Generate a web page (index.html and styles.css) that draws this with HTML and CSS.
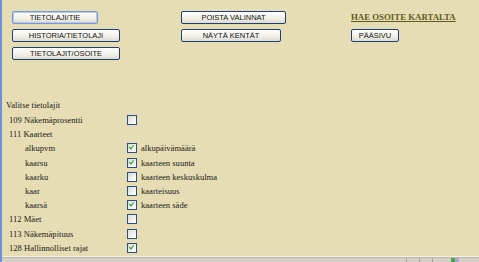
FILE: index.html
```html
<!DOCTYPE html>
<html>
<head>
  <title>Tietolajit</title>
  <link rel="stylesheet" href="styles.css">
</head>
<body>
  <div class="frame">
    <div class="page">
      <div class="toolbar">
        <div class="col">
          <button class="btn focus w86">TIETOLAJI/TIE</button>
          <button class="btn w108">HISTORIA/TIETOLAJI</button>
          <button class="btn w108">TIETOLAJIT/OSOITE</button>
        </div>
        <div class="col">
          <button class="btn w105">POISTA VALINNAT</button>
          <button class="btn w100">NÄYTÄ KENTÄT</button>
        </div>
        <div class="col">
          <a class="maplink" href="#">HAE OSOITE KARTALTA</a>
          <button class="btn w48">PÄÄSIVU</button>
        </div>
      </div>

      <div class="fields">
        <div class="title">Valitse tietolajit</div>
        <div class="row"><span class="name">109 Näkemäprosentti</span><span class="cb"></span></div>
        <div class="row"><span class="name">111 Kaarteet</span></div>
        <div class="row sub"><span class="name">alkupvm</span><span class="cb on"></span><span class="lbl">alkupäivämäärä</span></div>
        <div class="row sub"><span class="name">kaarsu</span><span class="cb on"></span><span class="lbl">kaarteen suunta</span></div>
        <div class="row sub"><span class="name">kaarku</span><span class="cb"></span><span class="lbl">kaarteen keskuskulma</span></div>
        <div class="row sub"><span class="name">kaar</span><span class="cb"></span><span class="lbl">kaarteisuus</span></div>
        <div class="row sub"><span class="name">kaarsä</span><span class="cb on"></span><span class="lbl">kaarteen säde</span></div>
        <div class="row"><span class="name">112 Mäet</span><span class="cb"></span></div>
        <div class="row"><span class="name">113 Näkemäpituus</span><span class="cb"></span></div>
        <div class="row"><span class="name">128 Hallinnolliset rajat</span><span class="cb on"></span></div>
      </div>
    </div>
    <div class="statusbar">
      <span class="seg"></span>
      <span class="seg"></span>
      <span class="seg"></span>
      <span class="zone"></span>
    </div>
  </div>
</body>
</html>
```

FILE: styles.css
```css
html, body {
  margin: 0;
  background: #e6ddb4;
}

.frame {
  height: 262px;
  display: flex;
  flex-direction: column;
  border-left: 2px solid #6f8fd6;
  box-sizing: border-box;
}

.page {
  flex: 1;
  border-bottom: 1px solid #f6f3e6;
}

/* BUTTON AREA */
.toolbar {
  display: grid;
  grid-template-columns: 169px 170px auto;
  padding: 11px 0 0 10px;
}

.col {
  display: flex;
  flex-direction: column;
  align-items: flex-start;
  gap: 5px;
}

.btn {
  height: 13px;
  padding: 0;
  font-family: "Liberation Sans", Arial, sans-serif;
  font-size: 7.5px;
  line-height: 11px;
  color: #111;
  background: linear-gradient(#ffffff, #f1efe6 60%, #dedbd0);
  border: 1px solid #1e3f78;
  border-radius: 2px;
}

.btn.focus {
  border-color: #7898dc;
  box-shadow: inset 0 0 0 1px #b6c8f0;
}

.w86 { width: 86px; }
.w100 { width: 100px; }
.w105 { width: 105px; }
.w108 { width: 108px; }
.w48 { width: 48px; }

.maplink {
  height: 13px;
  font-family: "Liberation Serif", "Times New Roman", serif;
  font-weight: bold;
  font-size: 8.8px;
  line-height: 13px;
  color: #5e5b1f;
}

/* FIELD LIST */
.fields {
  padding: 38px 0 0 4px;
  font-family: "Liberation Serif", "Times New Roman", serif;
  font-size: 8.6px;
  color: #1a1a1a;
}

.title {
  height: 15px;
  line-height: 15px;
}

.row {
  display: flex;
  align-items: center;
  height: 14.2px;
  padding-left: 3px;
}

.row .name {
  width: 118px;
}

.row.sub .name {
  padding-left: 16px;
  width: 102px;
}

.cb {
  width: 8px;
  height: 8px;
  border: 1px solid #2c4f86;
  background: linear-gradient(135deg, #dcdcd6, #ffffff);
  position: relative;
}

.cb.on::after {
  content: "";
  position: absolute;
  left: 2px;
  top: 0px;
  width: 2px;
  height: 4px;
  border: solid #21a221;
  border-width: 0 1.5px 1.5px 0;
  transform: rotate(40deg);
}

.lbl {
  margin-left: 4px;
}

/* STATUS BAR */
.statusbar {
  height: 4px;
  background: #d4d0c8;
  border-top: 1px solid #bab6ab;
  display: flex;
  justify-content: flex-end;
  padding-right: 20px;
}

.seg {
  width: 12px;
  border-left: 1px solid #a8a498;
}

.zone {
  width: 8px;
  margin-left: 6px;
  background: linear-gradient(90deg, #4aa84a 50%, #a9a9d8 50%);
}
```
